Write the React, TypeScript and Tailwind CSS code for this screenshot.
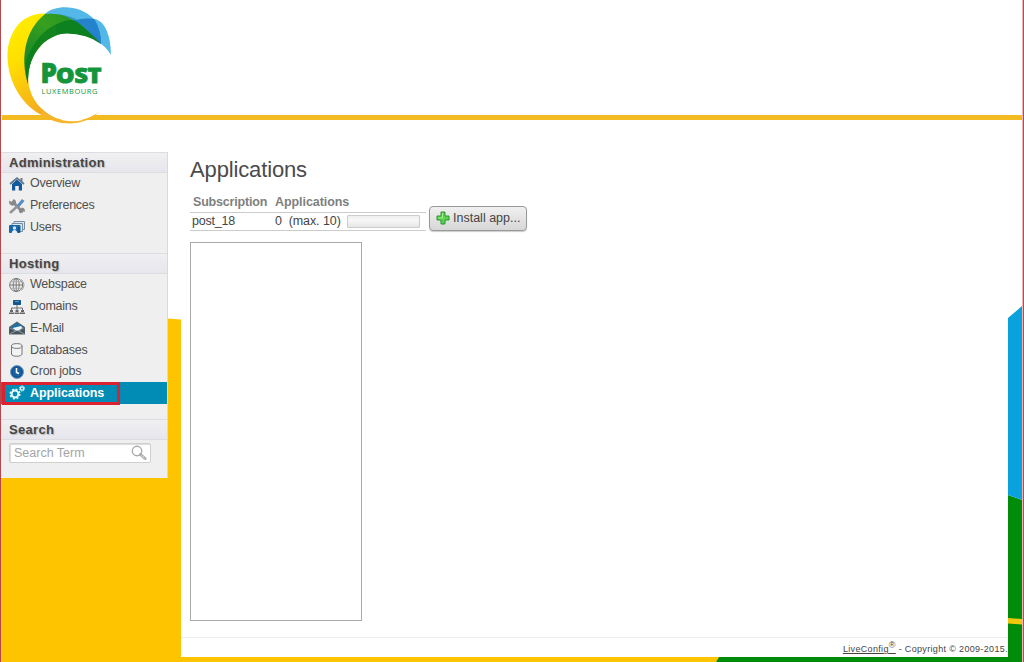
import type { ReactNode } from "react";

function Backdrop() {
  return (
    <svg className="absolute inset-0" width="1024" height="662" viewBox="0 0 1024 662">
      <path d="M1 318.500H167L181 319.500V657H719L716 662H1Z" fill="#ffc400" />
      <path d="M719 657H1008V495L1022 500V662H716Z" fill="#008c08" />
      <path d="M1008 318L1022 306V500L1008 495Z" fill="#0aa2dc" />
      <path d="M1008 618L1022 619V624.500L1008 623.500Z" fill="#eec80c" />
      <path d="M0.500 0V662" stroke="#b5474c" />
      <path d="M1022.500 0V662" stroke="#f0b4b4" />
      <path d="M1023.500 0V662" stroke="#c8444c" />
    </svg>
  );
}

function Logo() {
  return (
    <svg className="absolute top-0 left-0" width="120" height="130" viewBox="0 0 120 130">
      <defs>
        <linearGradient id="yellow" x1="0" y1="0" x2="0.3" y2="1">
          <stop offset="0" stopColor="#fff000" />
          <stop offset="0.45" stopColor="#ffe000" />
          <stop offset="1" stopColor="#f5ad1c" />
        </linearGradient>
        <linearGradient id="green" x1="1" y1="0" x2="0" y2="1">
          <stop offset="0" stopColor="#178a26" />
          <stop offset="0.45" stopColor="#38a01f" />
          <stop offset="1" stopColor="#0b7a2a" />
        </linearGradient>
        <linearGradient id="blue" x1="0" y1="0" x2="1" y2="1">
          <stop offset="0" stopColor="#3b9fdb" />
          <stop offset="1" stopColor="#1d76c6" />
        </linearGradient>
      </defs>
      <path d="M46 13.500C22 12 7.500 32 7.500 56C7.500 84 25 108 43 115.500L60 119L40 60Z" fill="url(#yellow)" />
      <circle cx="72" cy="77" r="44" fill="#fff" />
      <path d="M42 109C57 124 82 126 100 111C84 128 57 126 42 115Z" fill="#f5b52a" />
      <path d="M28 84C20 58 25 30 45 14C60 10 76 15 87 24L101 44C82 27 52 30 38 49C30 60 28 70 28 84Z" fill="url(#green)" />
      <path d="M25.500 65C32 38 52 21 72 20C84 24 94 34 101 44C82 27 52 30 38 49C30 60 28 70 28 84C26.500 78 25.500 71 25.500 65Z" fill="#087c1c" opacity=".75" />
      <path d="M45 14C56 4 80 5 94 19C104 20 111 34 111 55C107.500 49 104 46 101 44C91 27 74 12 45 14Z" fill="#53b7e8" />
      <path d="M60 14.500C69 16 76 19.500 78 20C84 18.500 90 18.500 94 19C97 23 101 33 101 44C95 37 86 32 77 29C80 25 73 18 60 14.500Z" fill="url(#blue)" />
      <path d="M56 26Q66 20 75 20.500Q84 26 101 44Q84 31 56 34Z" fill="#0d8020" />
      <path d="M75 20.500Q84 17.500 94 19Q101 29 101 44Q90 28 75 20.500Z" fill="#2583cd" />
      <g fill="#15953b" stroke="#15953b" fontFamily="'Open Sans', sans-serif">
        <text x="40.500" y="83.300" fontSize="27.500" fontWeight="800" strokeWidth=".7" textLength="16.500" lengthAdjust="spacingAndGlyphs">P</text>
        <text x="56" y="83.300" fontSize="20.500" fontWeight="800" strokeWidth=".9" textLength="45.500" lengthAdjust="spacingAndGlyphs">OST</text>
        <text x="41.500" y="94" fontSize="7.500" fontWeight="400" stroke="none" textLength="56" lengthAdjust="spacing">LUXEMBOURG</text>
      </g>
    </svg>
  );
}

const icons: Record<string, ReactNode> = {
  home: (
    <>
      <path d="M3 8L8 3.500L13 8V14.500H9.800V10H6.200V14.500H3Z" fill="#14599b" />
      <path d="M1 8L8 2L15 8" fill="none" stroke="#5d7890" strokeWidth="1.700" />
      <path d="M11.500 2H13.500V6L11.500 4Z" fill="#777" />
    </>
  ),
  tools: (
    <>
      <path d="M4 4L13 13.500" stroke="#8b8b8b" strokeWidth="2.600" strokeLinecap="round" />
      <path d="M0.500 2.500L3 4.300L4.500 1A3.500 3.500 0 0 1 7 5L4.500 7.500A3.500 3.500 0 0 1 0.500 2.500M10 12L13 9.500A3 3 0 0 1 15.500 14L13 12.500L12 15.500A3 3 0 0 1 10 12" fill="#888" />
      <path d="M1.800 14.200L8 8.500" stroke="#959595" strokeWidth="2.600" strokeLinecap="round" />
      <path d="M8 7L13 1L15.500 3L10 9.200Z" fill="#568fc1" />
    </>
  ),
  users: (
    <>
      <path d="M5 5V2.500H15.500V10.500H13M3 7V4.500H13.500V12.500H11" fill="#dce5ed" stroke="#788e9e" />
      <rect x="0" y="6" width="11.500" height="8" rx="1" fill="#1768a8" />
      <circle cx="5.500" cy="9" r="1.700" fill="#d8e8f4" />
      <path d="M2.500 14.500Q3 11 5.500 11Q8 11 8.500 14.500Z" fill="#e9eef2" />
      <path d="M10 8V13" stroke="#0b4071" />
    </>
  ),
  globe: (
    <g fill="none" stroke="#777">
      <circle cx="7.200" cy="8" r="6.500" />
      <ellipse cx="7.200" cy="8" rx="3" ry="6.500" />
      <path d="M7.200 1.500V14.500M.7 8H13.700" />
      <path d="M1.700 4.800H12.700M1.700 11.200H12.700" stroke="#aaa" />
      <path d="M12.500 2.500Q17.500 8 12.500 13.500" stroke="#9aa4aa" />
    </g>
  ),
  network: (
    <>
      <rect x="4" y="1" width="8" height="5" rx=".7" fill="#14588e" />
      <path d="M6 2.500H10" stroke="#6699c0" />
      <path d="M8 6V9M2.500 12V9H13.500V12M8 9V12" fill="none" stroke="#6c7073" />
      <path d="M1 11H4V13H1ZM6.500 11H9.500V13H6.500ZM12 11H15V13H12ZM0 13.500H5V15H0ZM5.500 13.500H10.500V15H5.500ZM11 13.500H16V15H11Z" fill="#63676a" />
    </>
  ),
  mail: (
    <>
      <path d="M0 7L8 1.500L16 7V14.500H0Z" fill="#55636d" />
      <path d="M2 7L8 3L14 7L8 11Z" fill="#1971a5" />
      <path d="M3.500 8L12 6L13.500 8L8 11.500Z" fill="#edf5f8" />
      <path d="M.5 8L6.500 11L.5 14M15.500 8L10 11L15.500 14M.5 14L8 10.500L15.500 14" fill="#46535b" stroke="#a1adb4" strokeWidth=".5" />
    </>
  ),
  database: (
    <g fill="#f3f3f3" stroke="#777">
      <path d="M2.500 4V12C2.500 15 13 15 13 12V4" />
      <ellipse cx="7.750" cy="4" rx="5.250" ry="2.400" />
    </g>
  ),
  clock: (
    <>
      <circle cx="8" cy="8" r="6.500" fill="#1a62a4" stroke="#7597b2" />
      <circle cx="8" cy="8" r="5" fill="none" stroke="#114f8b" />
      <path d="M7.500 4V8.500L10 9.500" fill="none" stroke="#fff" strokeWidth="1.500" />
    </>
  ),
  gears: (
    <g fill="none" stroke="#e6f8fb">
      <circle cx="6" cy="9" r="3.400" strokeWidth="2" />
      <circle cx="6" cy="9" r="4.800" strokeWidth="1.500" strokeDasharray="2 1.770" />
      <circle cx="13" cy="3.500" r="1.600" strokeWidth="1.300" />
      <circle cx="13" cy="3.500" r="2.600" strokeDasharray="1.200 .84" />
    </g>
  ),
};

function NavItem({ icon, label, active = false }: { icon: string; label: string; active?: boolean }) {
  return (
    <li className={active ? "relative flex h-[22px] items-center gap-[5px] bg-[#008cb4] pl-2 font-bold text-white" : "flex h-[21.7px] items-center gap-[5px] pl-2"}>
      <svg width="16" height="16" viewBox="0 0 16 16" className="shrink-0">{icons[icon]}</svg>
      <span className={active ? "tracking-[-0.07px]" : "tracking-[-0.26px]"}>{label}</span>
      {active && <span className="absolute top-0 left-px h-[23px] w-[118px] border-[3px] border-[#dc2230]" />}
    </li>
  );
}

function SectionTitle({ children }: { children: string }) {
  return (
    <h2 className="h-[21px] border-y border-[#dcdce2] bg-linear-to-b from-[#f0f0f1] to-[#e6e6ed] pl-2 text-[13px] leading-[19px] font-bold tracking-[0.3px] text-[#454545] [text-shadow:1px_1px_1px_#bbb]">
      {children}
    </h2>
  );
}

function Sidebar() {
  return (
    <aside className="mt-8 ml-px h-[326px] w-[167px] shrink-0 border-r border-[#d9d9d9] bg-[#efefef] text-[12.5px] text-[#505050]">
      <SectionTitle>Administration</SectionTitle>
      <ul className="h-20">
        <NavItem icon="home" label="Overview" />
        <NavItem icon="tools" label="Preferences" />
        <NavItem icon="users" label="Users" />
      </ul>
      <SectionTitle>Hosting</SectionTitle>
      <ul className="h-[145px]">
        <NavItem icon="globe" label="Webspace" />
        <NavItem icon="network" label="Domains" />
        <NavItem icon="mail" label="E-Mail" />
        <NavItem icon="database" label="Databases" />
        <NavItem icon="clock" label="Cron jobs" />
        <NavItem icon="gears" label="Applications" active />
      </ul>
      <SectionTitle>Search</SectionTitle>
      <label className="mt-[3px] ml-2 flex h-5 w-[142px] items-center justify-between rounded-[2px] border border-[#cfcfcf] bg-white pr-[3px] pl-1 shadow-[inset_1px_1px_1px_#ddd]">
        <input aria-label="Search Term" placeholder="Search Term" className="w-24 outline-none placeholder:text-[#a4a4a4]" />
        <svg width="16" height="16" viewBox="0 0 16 16" fill="none" stroke="#aaa">
          <circle cx="6" cy="6" r="4.700" strokeWidth="1.400" />
          <path d="M9.500 9.500L14 13.500" strokeWidth="3" strokeLinecap="round" />
          <path d="M10.500 10.500L13.500 13" stroke="#e5e5e5" />
        </svg>
      </label>
    </aside>
  );
}

export default function App() {
  return (
    <div className="relative h-[662px] w-[1024px] overflow-hidden bg-white font-['Liberation_Sans',Arial,sans-serif] text-[12.5px] text-[#444]">
      <Backdrop />
      <header className="relative h-[120px] pt-[115px] pr-0.5 pl-0.5">
        <div className="h-[4.500px] bg-[#f2bb21]" />
        <Logo />
      </header>
      <div className="relative flex h-[537px]">
        <Sidebar />
        <main className="ml-[13px] flex w-[827px] flex-col bg-white">
          <h1 className="mt-[35px] ml-[9px] h-[30px] text-[22px] leading-[30px] tracking-[-0.14px] text-[#4b4b4b]">Applications</h1>
          <section className="mt-2 ml-[9px] flex h-[40px]">
            <table className="h-[37px] w-[236px] table-fixed border-collapse text-left">
              <colgroup><col className="w-[82px]" /><col className="w-[154px]" /></colgroup>
              <thead>
                <tr className="h-[19px] text-[#808080]">
                  <th className="border-b border-[#ccc] p-0 pl-[3px] leading-[18px]"><span className="tracking-[-0.18px]">Subscription</span></th>
                  <th className="border-b border-[#ccc] p-0 pl-[3px] leading-[18px]"><span className="tracking-[-0.07px]">Applications</span></th>
                </tr>
              </thead>
              <tbody>
                <tr className="h-[18px]">
                  <td className="border-b border-[#ccc] p-0 pl-0.5 leading-[17px] tracking-[-0.2px]">post_18</td>
                  <td className="border-b border-[#ccc] p-0 pl-[3px] leading-[17px]">
                    <div className="flex items-center">
                      <span className="w-[72px] tracking-[-0.08px] whitespace-pre">0  (max. 10)</span>
                      <span className="h-[13px] w-[73px] rounded-[1px] border border-[#ccc] bg-linear-to-b from-[#eee] via-[#f7f7f7] via-40% to-[#e6e6e6]" />
                    </div>
                  </td>
                </tr>
              </tbody>
            </table>
            <button className="mt-[13px] ml-[3px] flex h-[25px] w-[98px] items-center rounded-[4px] border border-[#999] bg-linear-to-b from-[#f0f0f0] to-[#d7d7d7] pb-px pl-1.5 text-[12.5px] whitespace-nowrap text-[#444] shadow-[0_1px_1px_#ccc]">
              <svg width="14" height="14" viewBox="0 0 14 14" className="mr-[3px] shrink-0">
                <path d="M5 1H9V5H13V9H9V13H5V9H1V5H5Z" fill="#5ed052" stroke="#27962b" />
                <path d="M6.500 2V7H2" fill="none" stroke="#a4ef91" />
              </svg>
              Install app...
            </button>
          </section>
          <section className="mt-[9px] ml-[9px] h-[379px] w-[172px] border border-[#aaa] bg-white" />
          <footer className="mt-auto flex h-5 items-start justify-end border-t border-[#ececec] pt-[5px] text-[9px] leading-[13px] tracking-[0.34px] text-[#444]">
            <a className="underline">LiveConfig<sup className="text-[9px]">®</sup></a>
            <span className="whitespace-pre"> - Copyright © 2009-2015.</span>
          </footer>
        </main>
      </div>
    </div>
  );
}
